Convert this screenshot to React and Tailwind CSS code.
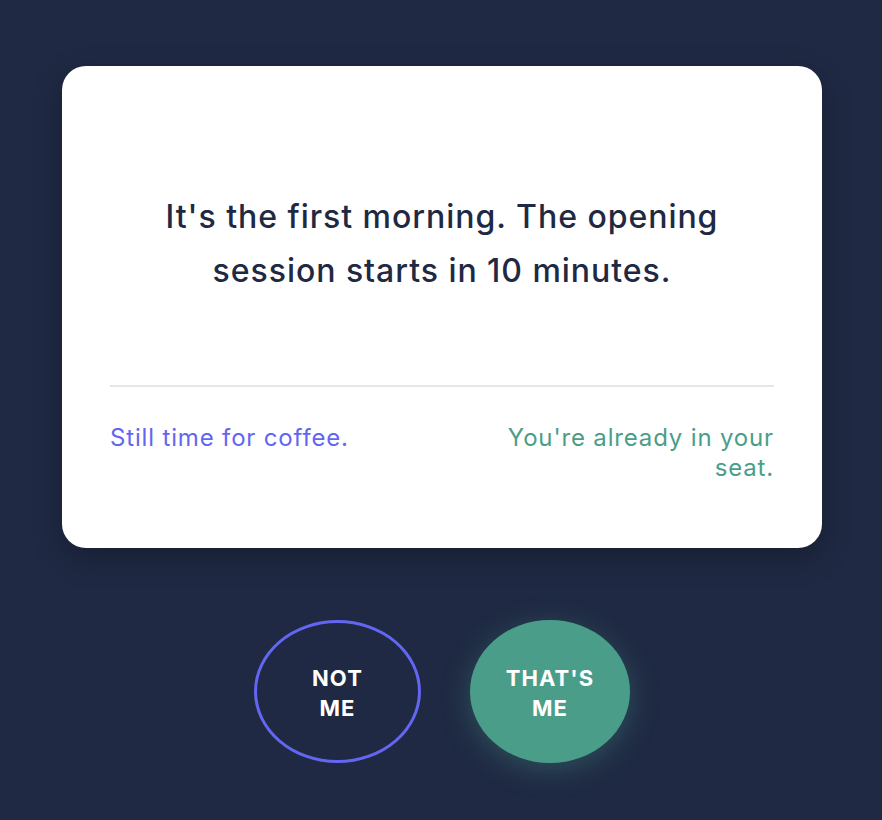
export default function App() {
  return (
    <div
      className="flex min-h-[820px] flex-col items-center bg-[#1f2943] pl-[2px] pt-[66px]"
      style={{ fontFamily: "Inter, 'Noto Sans', sans-serif" }}
    >
      {/* card */}
      <div className="w-[760px] rounded-[24px] bg-white px-12 pb-[65px] pt-[124px] shadow-[0_10px_30px_rgba(0,0,0,0.25)]">
        <p className="text-center text-[32px] font-medium leading-[54px] tracking-[0.03em] text-[#1f2943]">
          It's the first morning. The opening
          <br />
          session starts in 10 minutes.
        </p>

        <div className="mt-[87px] h-[2px] bg-[#e4e7ec]" />

        <div className="mt-[36px] grid grid-cols-2 gap-8 text-[24px] leading-[30px] tracking-[0.035em]">
          <p className="text-[#6366f1]">Still time for coffee.</p>
          <p className="text-right text-[#4a9e89]">You're already in your seat.</p>
        </div>
      </div>

      {/* buttons */}
      <div className="mt-[72px] flex items-center gap-[49px]">
        <button className="flex h-[143px] w-[167px] items-center justify-center rounded-[50%] border-[3px] border-[#6366f1] pt-[3px] text-[22px] font-bold uppercase leading-[30px] tracking-[0.05em] text-white">
          Not
          <br />
          me
        </button>
        <button className="flex h-[143px] w-[160px] items-center justify-center rounded-[50%] bg-[#4a9e89] pt-[3px] text-[22px] font-bold uppercase leading-[30px] tracking-[0.05em] text-white shadow-[0_6px_28px_rgba(74,158,137,0.35)]">
          That's
          <br />
          me
        </button>
      </div>
    </div>
  );
}
